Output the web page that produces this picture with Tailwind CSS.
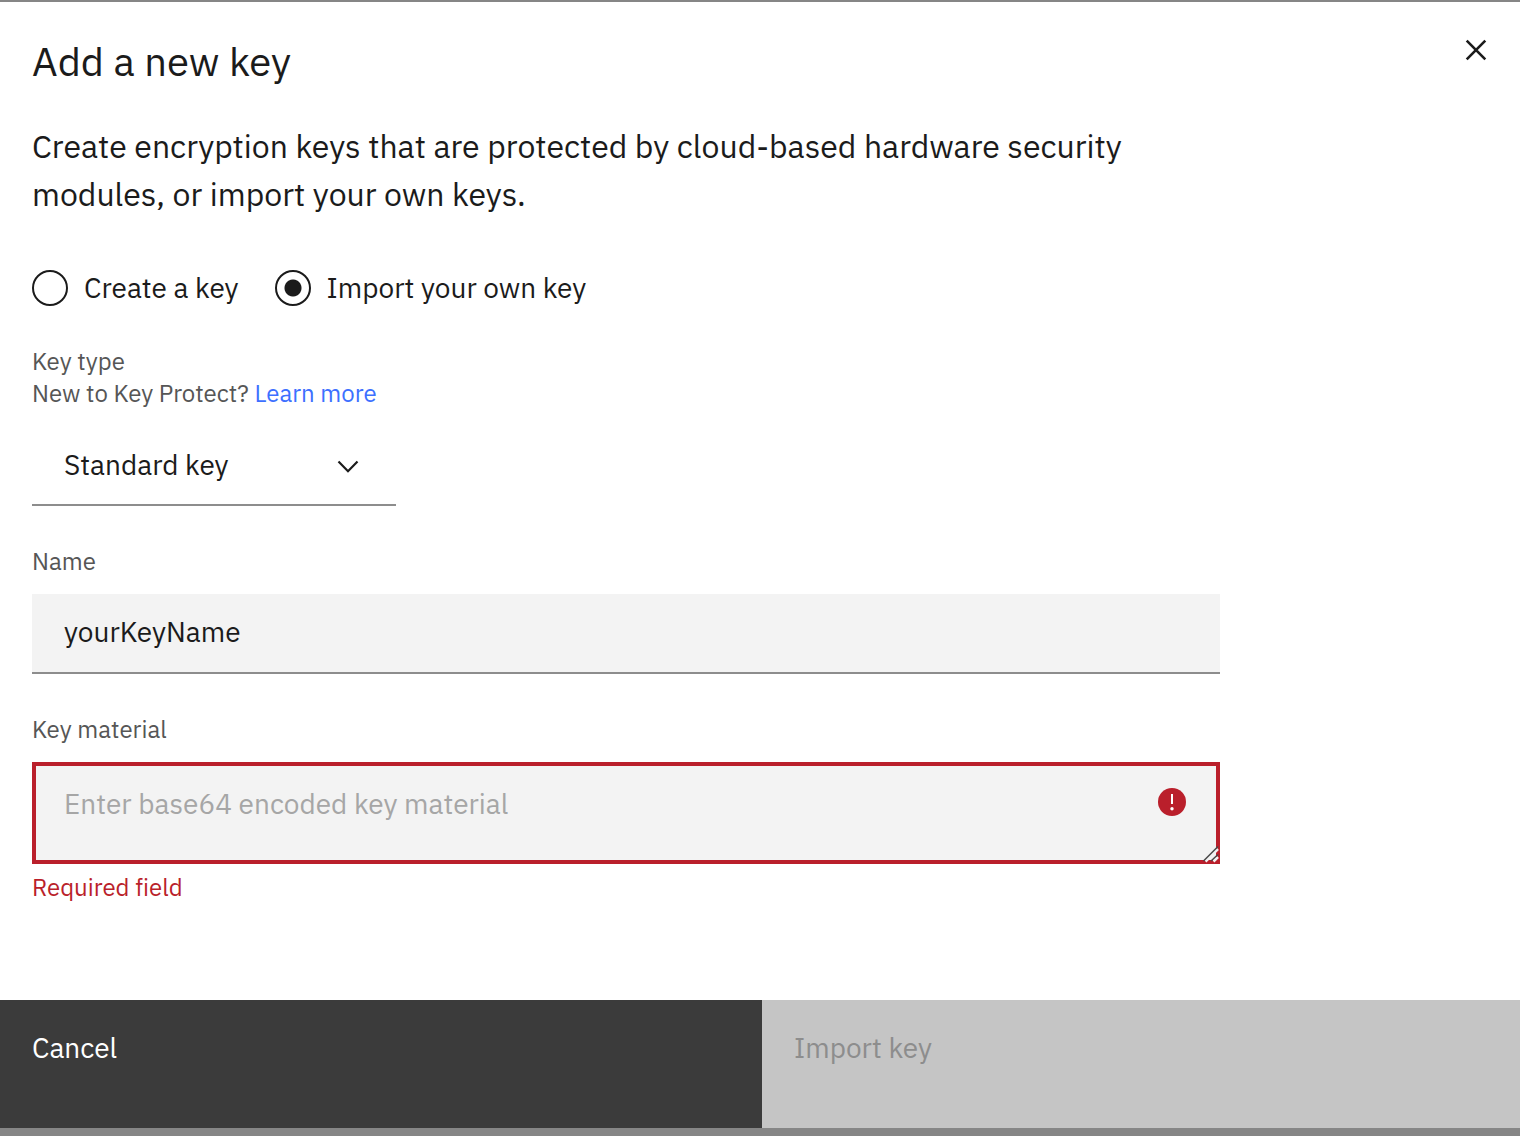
<!DOCTYPE html>
<html lang="en">
<head>
<meta charset="utf-8">
<meta name="viewport" content="width=device-width, initial-scale=1">
<title>Add a new key</title>
<script src="https://cdn.jsdelivr.net/npm/@tailwindcss/browser@4"></script>
</head>
<body class="bg-[#868686] font-['IBM_Plex_Sans',Roboto,sans-serif] text-[28px] leading-9 text-[#1b1b1b] antialiased [font-variant-ligatures:no-common-ligatures]">
<div class="flex min-h-screen flex-col pt-0.5 pb-2">
  <main role="dialog" aria-labelledby="title" class="flex grow flex-col bg-white">
    <header class="flex items-start justify-between pt-7 pr-6 pl-8">
      <h1 id="title" class="pt-2 text-[40px] leading-[46px]">Add a new key</h1>
      <button type="button" aria-label="Close" class="flex size-10 shrink-0 items-center justify-center">
        <svg viewBox="0 0 20 20" class="size-5 overflow-visible" fill="none" stroke="currentColor" stroke-width="2.6"><path d="M.7.7 19.3 19.3M19.3.7.7 19.3"/></svg>
      </button>
    </header>
    <form id="key-form" class="flex w-full max-w-[1220px] flex-col pl-8">
      <p class="pt-[38px] pr-16 text-[32px] leading-12">Create encryption keys that are protected by cloud-based hardware security modules, or import your own keys.</p>
      <div role="radiogroup" aria-label="Key source" class="mt-13 flex gap-9">
        <label class="flex items-center gap-4">
          <input type="radio" name="source" value="create" class="size-9 shrink-0 appearance-none rounded-full border-2 border-[#1b1b1b] checked:bg-[radial-gradient(circle,#1b1b1b_0_8px,transparent_9px)]">
          Create a key
        </label>
        <label class="flex items-center gap-4">
          <input type="radio" name="source" value="import" checked class="size-9 shrink-0 appearance-none rounded-full border-2 border-[#1b1b1b] checked:bg-[radial-gradient(circle,#1b1b1b_0_8px,transparent_9px)]">
          Import your own key
        </label>
      </div>
      <div class="mt-[39px] text-2xl leading-8 text-[#565656]">
        <label for="type">Key type</label>
        <p>New to Key Protect? <a href="#" class="text-[#3d70ff]">Learn more</a></p>
      </div>
      <div class="relative mt-[17px] w-[364px]">
        <select id="type" class="h-20 w-full appearance-none border-b-2 border-[#8d8d8d] bg-white px-8">
          <option>Standard key</option>
        </select>
        <svg viewBox="0 0 20 12" class="pointer-events-none absolute top-[35px] right-[38px] h-3 w-5 overflow-visible" fill="none" stroke="currentColor" stroke-width="2.2"><path d="M.5.5 10 10.200 19.500.5"/></svg>
      </div>
      <label for="name" class="mt-[39px] text-2xl leading-8 text-[#565656]">Name</label>
      <input id="name" type="text" value="yourKeyName" class="mt-[17px] h-20 border-b-2 border-[#8d8d8d] bg-[#f3f3f3] px-8 pb-1">
      <label for="material" class="mt-[39px] text-2xl leading-8 text-[#565656]">Key material</label>
      <div class="relative mt-[17px] flex">
        <textarea id="material" rows="1" aria-invalid="true" aria-describedby="material-error" placeholder="Enter base64 encoded key material" class="h-[102px] w-full resize-none border-4 border-[#ba1f2b] bg-[#f3f3f3] px-7 py-5 placeholder:text-[#a6a6a6]"></textarea>
        <svg viewBox="0 0 28 28" class="absolute top-[26px] right-[34px] size-7"><circle cx="14" cy="14" r="14" fill="#ba1f2b"/><path d="M13 6h2v10h-2z" fill="#fff"/><circle cx="14" cy="20.8" r="1.7" fill="#fff"/></svg>
        <svg viewBox="0 0 18 18" class="pointer-events-none absolute right-0 bottom-0 size-[18px]" fill="none"><path d="M3.500 15.500 16 3M11.500 15.500 16 11" stroke="#f3f3f3" stroke-width="2.500"/><path d="M1.500 15 16 .5M9 15 16 8.500" stroke="#4a4a4a" stroke-width="1.500"/></svg>
      </div>
      <p id="material-error" class="mt-[7px] mb-8 text-2xl leading-8 text-[#ba1f2b]">Required field</p>
    </form>
    <footer class="mt-auto flex h-32">
      <button type="button" class="flex w-[calc(50%+2px)] shrink-0 items-start bg-[#3b3b3b] px-8 pt-[30px] text-white">Cancel</button>
      <button type="submit" form="key-form" disabled class="flex grow items-start bg-[#c5c5c5] px-8 pt-[30px] text-[#8d8d8d]">Import key</button>
    </footer>
  </main>
</div>
</body>
</html>
